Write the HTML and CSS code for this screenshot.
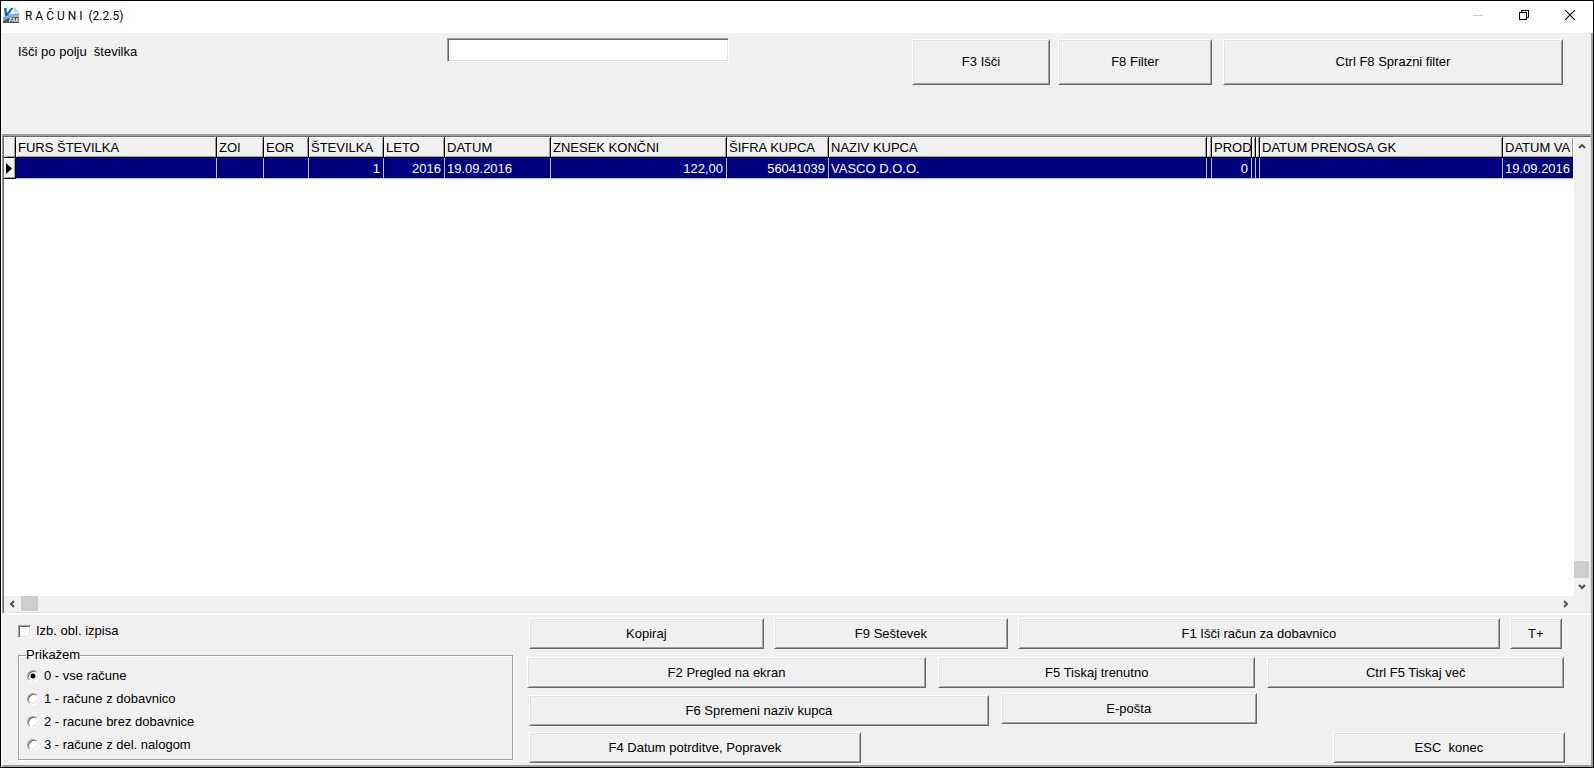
FILE: index.html
```html
<!DOCTYPE html>
<html lang="sl">
<head>
<meta charset="utf-8">
<title>RAČUNI (2.2.5)</title>
<link rel="stylesheet" href="styles.css">
</head>
<body>
<div class="window">
  <header class="titlebar">
    <svg class="app-icon" width="16" height="16" viewBox="0 0 16 16" aria-hidden="true">
      <path d="M0 0h11l5 5v11H0z" fill="#eef1f3"/>
      <path d="M11 0l5 5h-5z" fill="#c5cdd3"/>
      <path d="M0 10c5-3 10-3 16-4v4C10 9 5 11 0 14z" fill="#7fb3d3"/>
      <path d="M0 14c5-4 10-4 16-4v6H0z" fill="#4e5459"/>
      <path d="M1 1h2.500l.5 5 4-5h2.500L4.500 9H2z" fill="#0d6aa8"/>
      <text class="icon-text" x="6" y="15">FAK</text>
    </svg>
    <h1 class="title">R A Č U N I&nbsp; (2.2.5)</h1>
    <div class="caption-buttons">
      <button class="caption" type="button" aria-label="Minimiraj" disabled><svg width="10" height="10" viewBox="0 0 10 10"><path d="M0 5.500h10" stroke="#c8c8c8"/></svg></button>
      <button class="caption" type="button" aria-label="Obnovi"><svg width="10" height="10" viewBox="0 0 10 10" shape-rendering="crispEdges"><path d="M.5 2.500h7v7h-7zM2.500 2.500v-2h7v7h-2" fill="none" stroke="#000"/></svg></button>
      <button class="caption" type="button" aria-label="Zapri"><svg width="10" height="10" viewBox="0 0 10 10"><path d="M0 0l10 10M10 0L0 10" stroke="#000" stroke-width="1.100"/></svg></button>
    </div>
  </header>

  <main class="client">
    <section class="search">
      <label class="search-label" for="q">Išči po polju&nbsp; številka</label>
      <input class="search-input" id="q" type="text">
      <div class="search-actions">
        <button class="btn w138" type="button">F3 Išči</button>
        <button class="btn w154" type="button">F8 Filter</button>
        <button class="btn w340" type="button">Ctrl F8 Sprazni filter</button>
      </div>
    </section>

    <section class="grid">
      <div class="sheet">
        <table class="table">
          <colgroup>
            <col class="c-mark"><col class="c-furs"><col class="c-zoi"><col class="c-eor"><col class="c-num"><col class="c-year"><col class="c-date"><col class="c-sum"><col class="c-code"><col><col class="c-slim"><col class="c-prod"><col class="c-thin"><col class="c-thin"><col class="c-gk"><col class="c-va">
          </colgroup>
          <thead>
            <tr><th></th><th>FURS ŠTEVILKA</th><th>ZOI</th><th>EOR</th><th>ŠTEVILKA</th><th>LETO</th><th>DATUM</th><th>ZNESEK KONČNI</th><th>ŠIFRA KUPCA</th><th>NAZIV KUPCA</th><th></th><th>PROD</th><th></th><th></th><th>DATUM PRENOSA GK</th><th>DATUM VA</th></tr>
          </thead>
          <tbody>
            <tr><td class="mark"><svg width="6" height="11" viewBox="0 0 6 11"><path d="M0 0l6 5.500L0 11z"/></svg></td><td></td><td></td><td></td><td class="num">1</td><td class="num">2016</td><td>19.09.2016</td><td class="num">122,00</td><td class="num">56041039</td><td>VASCO D.O.O.</td><td></td><td class="num">0</td><td></td><td></td><td></td><td>19.09.2016</td></tr>
          </tbody>
        </table>
      </div>
      <div class="vscroll">
        <svg class="arrow" width="8" height="6" viewBox="0 0 8 6"><path d="M1 5l3-3 3 3"/></svg>
        <div class="thumb"></div>
        <svg class="arrow" width="8" height="6" viewBox="0 0 8 6"><path d="M1 1l3 3 3-3"/></svg>
      </div>
      <div class="hscroll">
        <svg class="arrow" width="6" height="8" viewBox="0 0 6 8"><path d="M5 1L2 4l3 3"/></svg>
        <div class="thumb"></div>
        <svg class="arrow" width="6" height="8" viewBox="0 0 6 8"><path d="M1 1l3 3-3 3"/></svg>
      </div>
      <div class="corner"></div>
    </section>

    <section class="panel">
      <div class="options">
        <label class="check"><input class="checkbox" type="checkbox">Izb. obl. izpisa</label>
        <fieldset class="group">
          <legend class="legend">Prikažem</legend>
          <label class="choice"><input class="radio" type="radio" name="show" checked>0 - vse račune</label>
          <label class="choice"><input class="radio" type="radio" name="show">1 - račune z dobavnico</label>
          <label class="choice"><input class="radio" type="radio" name="show">2 - racune brez dobavnice</label>
          <label class="choice"><input class="radio" type="radio" name="show">3 - račune z del. nalogom</label>
        </fieldset>
      </div>
      <div class="actions">
        <div class="row first">
          <button class="btn g235" type="button">Kopiraj</button>
          <button class="btn g235" type="button">F9 Seštevek</button>
          <button class="btn g482" type="button">F1 Išči račun za dobavnico</button>
          <button class="btn g51" type="button">T+</button>
        </div>
        <div class="row wide">
          <button class="btn g399" type="button">F2 Pregled na ekran</button>
          <button class="btn g317" type="button">F5 Tiskaj trenutno</button>
          <button class="btn g296" type="button">Ctrl F5 Tiskaj več</button>
        </div>
        <div class="row mail">
          <button class="btn low g459" type="button">F6 Spremeni naziv kupca</button>
          <button class="btn g255" type="button">E-pošta</button>
          <span class="g296"></span>
        </div>
        <div class="row last">
          <button class="btn g331" type="button">F4 Datum potrditve, Popravek</button>
          <span class="g474"></span>
          <button class="btn g231" type="button">ESC&nbsp; konec</button>
        </div>
      </div>
    </section>
  </main>
</div>
</body>
</html>
```
FILE: styles.css
```css
* { box-sizing: border-box; }

body {
  margin: 0;
  font-family: "Liberation Sans", Arial, sans-serif;
  font-size: 13px;
  line-height: 16px;
  color: #000;
}

.window {
  display: flex;
  flex-direction: column;
  min-height: 100vh;
  border: 1px solid #000;
  background: #fff;
}

/* Title bar */
.titlebar {
  display: flex;
  align-items: center;
  height: 32px;
  padding: 0 0 4px 2px;
}
.app-icon { flex: none; }
.icon-text {
  font-size: 5px;
  font-weight: bold;
  font-style: italic;
  fill: #fff;
}
.title {
  flex: 1;
  margin: 0 0 0 6px;
  padding-top: 1px;
  font-family: Roboto, "Open Sans", sans-serif;
  font-size: 12px;
  font-weight: normal;
}
.caption-buttons { display: flex; }
.caption {
  display: flex;
  align-items: center;
  justify-content: center;
  width: 46px;
  height: 28px;
  padding: 0;
  border: 0;
  background: none;
}

.client {
  flex: 1;
  display: flex;
  flex-direction: column;
  margin-left: 1px;
  border-right: 2px solid #a0a0a0;
  border-bottom: 2px solid #a0a0a0;
  background: #f0f0f0;
}

/* Raised push button */
.btn {
  height: 31px;
  padding: 0;
  border: 1px solid;
  border-color: #fff #696969 #696969 #fff;
  border-radius: 0;
  background: #f0f0f0;
  box-shadow: inset 1px 1px #e3e3e3, inset -1px -1px #a0a0a0;
  font: inherit;
  color: inherit;
  white-space: nowrap;
}

/* Search strip */
.search {
  display: flex;
  align-items: flex-start;
  height: 101px;
  padding: 5px 28px 0 16px;
}
.search-label {
  width: 429px;
  padding-top: 6px;
}
.search-input {
  width: 282px;
  height: 24px;
  padding: 2px 4px;
  border: 1px solid;
  border-color: #a0a0a0 #fff #fff #a0a0a0;
  background: #fff;
  box-shadow: inset 1px 1px #696969, inset -1px -1px #e3e3e3;
  font: inherit;
  outline: none;
}
.search-actions {
  display: flex;
  margin: 1px 0 0 auto;
}
.search-actions .btn { height: 46px; }
.w138 { width: 138px; margin-right: 8px; }
.w154 { width: 154px; margin-right: 11px; }
.w340 { width: 340px; }

/* Data grid */
.grid {
  flex: 1;
  display: grid;
  grid-template-columns: minmax(0, 1fr) 16px;
  grid-template-rows: minmax(0, 1fr) 17px;
  padding-right: 1px;
  border-top: 2px solid #a0a0a0;
  border-left: 1px solid #a0a0a0;
  border-bottom: 2px solid #fff;
  box-shadow: inset 1px 1px #696969, inset -1px -1px #e3e3e3;
}
.sheet {
  margin: 1px 0 0 1px;
  padding-right: 1px;
  overflow: hidden;
  background: #fff;
}
.table {
  width: 100%;
  table-layout: fixed;
  border-collapse: separate;
  border-spacing: 0;
}
.c-mark { width: 12px; }
.c-furs { width: 201px; }
.c-zoi { width: 47px; }
.c-eor { width: 45px; }
.c-num { width: 75px; }
.c-year { width: 61px; }
.c-date { width: 106px; }
.c-sum { width: 176px; }
.c-code { width: 102px; }
.c-slim { width: 5px; }
.c-prod { width: 40px; }
.c-thin { width: 4px; }
.c-gk { width: 243px; }
.c-va { width: 70px; }

th, td {
  height: 21px;
  padding: 2px 0 0 2px;
  overflow: hidden;
  white-space: nowrap;
  font-weight: normal;
  text-align: left;
}
th {
  border-right: 1px solid #000;
  border-bottom: 1px solid #000;
  background: #f0f0f0;
  box-shadow: inset 1px 1px #fff, inset -1px -1px #a0a0a0;
}
td {
  border-right: 1px solid #c0c0c0;
  border-bottom: 1px solid #c0c0c0;
  background: #000080;
  color: #fff;
}
th:last-child, td:last-child { border-right: 0; }
.num {
  padding: 2px 3px 0 0;
  text-align: right;
}
.mark {
  padding-top: 0;
  border-color: #000;
  background: #f0f0f0;
  box-shadow: inset 1px 1px #fff, inset -1px -1px #a0a0a0;
}
.mark svg { display: block; }

/* Scroll bars */
.vscroll, .hscroll {
  display: flex;
  align-items: center;
  justify-content: flex-end;
  background: #f0f0f0;
}
.vscroll {
  flex-direction: column;
  margin-top: 1px;
  padding: 6px 1px 6px 0;
}
.hscroll {
  margin: 0 0 2px 1px;
  padding: 0 5px;
}
.arrow {
  flex: none;
  fill: none;
  stroke: #505050;
  stroke-width: 2;
}
.thumb { background: #cdcdcd; }
.vscroll .thumb {
  width: 15px;
  height: 17px;
  margin: auto 0 6px;
}
.hscroll .thumb {
  width: 17px;
  height: 15px;
  margin: 0 auto 0 6px;
}

/* Bottom panel */
.panel {
  display: flex;
  height: 150px;
  padding: 3px 26px 0 16px;
}
.options {
  flex: none;
  width: 495px;
  margin-right: 14px;
}
.check {
  display: flex;
  align-items: center;
  gap: 5px;
  padding-top: 5px;
}
.checkbox, .radio {
  flex: none;
  appearance: none;
  margin: 0;
  border: 1px solid;
  border-color: #a0a0a0 #fff #fff #a0a0a0;
  background: #fff;
  box-shadow: inset 1px 1px #696969, inset -1px -1px #e3e3e3;
}
.checkbox {
  width: 13px;
  height: 13px;
}
.radio {
  width: 12px;
  height: 12px;
  border-radius: 50%;
}
.radio:checked { background: radial-gradient(circle, #000 2px, #fff 3px); }
.group {
  margin: 8px 0 0;
  padding: 1px 0 3px 8px;
  border: 1px solid #a0a0a0;
  box-shadow: 1px 1px #fff, inset 1px 1px #fff;
}
.legend {
  margin-left: -1px;
  padding: 0;
  background: #f0f0f0;
}
.choice {
  display: flex;
  align-items: center;
  gap: 5px;
  height: 23px;
}

.actions {
  flex: 1;
  display: flex;
  flex-direction: column;
  gap: 5px;
}
.row {
  display: flex;
  align-items: flex-start;
  gap: 12px;
  padding: 0 1px 0 2px;
}
.row.first {
  gap: 10px;
  margin-bottom: 3px;
  padding-right: 3px;
}
.row.wide { padding-left: 0; }
.row.mail { height: 33px; }
.row.last {
  gap: 0;
  margin-top: 1px;
  padding-right: 0;
}
.low { align-self: flex-end; }

.g51 { flex: 51 1 0; }
.g231 { flex: 231 1 0; }
.g235 { flex: 235 1 0; }
.g255 { flex: 255 1 0; }
.g296 { flex: 296 1 0; }
.g317 { flex: 317 1 0; }
.g331 { flex: 331 1 0; }
.g399 { flex: 399 1 0; }
.g459 { flex: 459 1 0; }
.g474 { flex: 474 1 0; }
.g482 { flex: 484 1 0; }
```
